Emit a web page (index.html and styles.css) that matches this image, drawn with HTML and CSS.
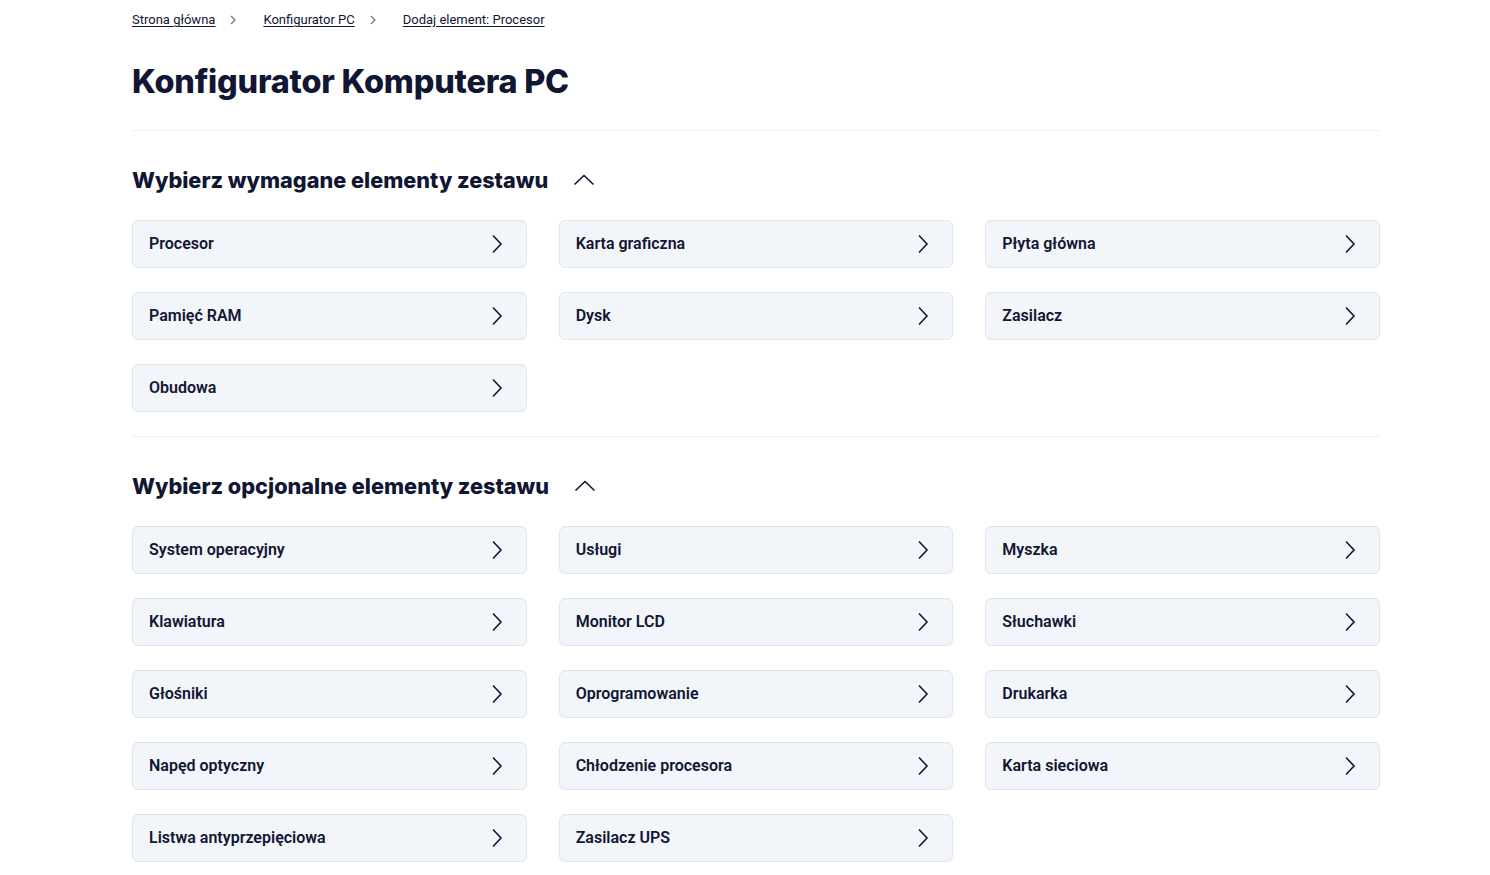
FILE: index.html
```html
<!DOCTYPE html>
<html lang="pl">
<head>
<meta charset="utf-8">
<title>Konfigurator Komputera PC</title>
<link rel="stylesheet" href="styles.css">
</head>
<body>
<div class="page">
  <nav class="crumbs">
    <a href="#">Strona główna</a>
    <svg class="sep" viewBox="0 0 8 10" width="8" height="10"><path d="M2 1l4 4-4 4" fill="none" stroke="#6b7085" stroke-width="1.2"/></svg>
    <a href="#">Konfigurator PC</a>
    <svg class="sep" viewBox="0 0 8 10" width="8" height="10"><path d="M2 1l4 4-4 4" fill="none" stroke="#6b7085" stroke-width="1.2"/></svg>
    <a href="#">Dodaj element: Procesor</a>
  </nav>
  <h1 class="title">Konfigurator Komputera PC</h1>
  <hr class="divider">
  <section class="group">
    <div class="group-head">
      <h2>Wybierz wymagane elementy zestawu</h2>
      <svg class="up" viewBox="0 0 22 12" width="22" height="12"><path d="M1.5 10.5l9.5-9 9.5 9" fill="none" stroke="#111633" stroke-width="1.6"/></svg>
    </div>
    <div class="grid">
      <a class="card" href="#"><span>Procesor</span><svg viewBox="0 0 12 20" width="12" height="20"><path d="M2 1.5l8 8.5-8 8.5" fill="none" stroke="#111633" stroke-width="1.6"/></svg></a>
      <a class="card" href="#"><span>Karta graficzna</span><svg viewBox="0 0 12 20" width="12" height="20"><path d="M2 1.5l8 8.5-8 8.5" fill="none" stroke="#111633" stroke-width="1.6"/></svg></a>
      <a class="card" href="#"><span>Płyta główna</span><svg viewBox="0 0 12 20" width="12" height="20"><path d="M2 1.5l8 8.5-8 8.5" fill="none" stroke="#111633" stroke-width="1.6"/></svg></a>
      <a class="card" href="#"><span>Pamięć RAM</span><svg viewBox="0 0 12 20" width="12" height="20"><path d="M2 1.5l8 8.5-8 8.5" fill="none" stroke="#111633" stroke-width="1.6"/></svg></a>
      <a class="card" href="#"><span>Dysk</span><svg viewBox="0 0 12 20" width="12" height="20"><path d="M2 1.5l8 8.5-8 8.5" fill="none" stroke="#111633" stroke-width="1.6"/></svg></a>
      <a class="card" href="#"><span>Zasilacz</span><svg viewBox="0 0 12 20" width="12" height="20"><path d="M2 1.5l8 8.5-8 8.5" fill="none" stroke="#111633" stroke-width="1.6"/></svg></a>
      <a class="card" href="#"><span>Obudowa</span><svg viewBox="0 0 12 20" width="12" height="20"><path d="M2 1.5l8 8.5-8 8.5" fill="none" stroke="#111633" stroke-width="1.6"/></svg></a>
    </div>
  </section>
  <hr class="divider">
  <section class="group">
    <div class="group-head">
      <h2>Wybierz opcjonalne elementy zestawu</h2>
      <svg class="up" viewBox="0 0 22 12" width="22" height="12"><path d="M1.5 10.5l9.5-9 9.5 9" fill="none" stroke="#111633" stroke-width="1.6"/></svg>
    </div>
    <div class="grid">
      <a class="card" href="#"><span>System operacyjny</span><svg viewBox="0 0 12 20" width="12" height="20"><path d="M2 1.5l8 8.5-8 8.5" fill="none" stroke="#111633" stroke-width="1.6"/></svg></a>
      <a class="card" href="#"><span>Usługi</span><svg viewBox="0 0 12 20" width="12" height="20"><path d="M2 1.5l8 8.5-8 8.5" fill="none" stroke="#111633" stroke-width="1.6"/></svg></a>
      <a class="card" href="#"><span>Myszka</span><svg viewBox="0 0 12 20" width="12" height="20"><path d="M2 1.5l8 8.5-8 8.5" fill="none" stroke="#111633" stroke-width="1.6"/></svg></a>
      <a class="card" href="#"><span>Klawiatura</span><svg viewBox="0 0 12 20" width="12" height="20"><path d="M2 1.5l8 8.5-8 8.5" fill="none" stroke="#111633" stroke-width="1.6"/></svg></a>
      <a class="card" href="#"><span>Monitor LCD</span><svg viewBox="0 0 12 20" width="12" height="20"><path d="M2 1.5l8 8.5-8 8.5" fill="none" stroke="#111633" stroke-width="1.6"/></svg></a>
      <a class="card" href="#"><span>Słuchawki</span><svg viewBox="0 0 12 20" width="12" height="20"><path d="M2 1.5l8 8.5-8 8.5" fill="none" stroke="#111633" stroke-width="1.6"/></svg></a>
      <a class="card" href="#"><span>Głośniki</span><svg viewBox="0 0 12 20" width="12" height="20"><path d="M2 1.5l8 8.5-8 8.5" fill="none" stroke="#111633" stroke-width="1.6"/></svg></a>
      <a class="card" href="#"><span>Oprogramowanie</span><svg viewBox="0 0 12 20" width="12" height="20"><path d="M2 1.5l8 8.5-8 8.5" fill="none" stroke="#111633" stroke-width="1.6"/></svg></a>
      <a class="card" href="#"><span>Drukarka</span><svg viewBox="0 0 12 20" width="12" height="20"><path d="M2 1.5l8 8.5-8 8.5" fill="none" stroke="#111633" stroke-width="1.6"/></svg></a>
      <a class="card" href="#"><span>Napęd optyczny</span><svg viewBox="0 0 12 20" width="12" height="20"><path d="M2 1.5l8 8.5-8 8.5" fill="none" stroke="#111633" stroke-width="1.6"/></svg></a>
      <a class="card" href="#"><span>Chłodzenie procesora</span><svg viewBox="0 0 12 20" width="12" height="20"><path d="M2 1.5l8 8.5-8 8.5" fill="none" stroke="#111633" stroke-width="1.6"/></svg></a>
      <a class="card" href="#"><span>Karta sieciowa</span><svg viewBox="0 0 12 20" width="12" height="20"><path d="M2 1.5l8 8.5-8 8.5" fill="none" stroke="#111633" stroke-width="1.6"/></svg></a>
      <a class="card" href="#"><span>Listwa antyprzepięciowa</span><svg viewBox="0 0 12 20" width="12" height="20"><path d="M2 1.5l8 8.5-8 8.5" fill="none" stroke="#111633" stroke-width="1.6"/></svg></a>
      <a class="card" href="#"><span>Zasilacz UPS</span><svg viewBox="0 0 12 20" width="12" height="20"><path d="M2 1.5l8 8.5-8 8.5" fill="none" stroke="#111633" stroke-width="1.6"/></svg></a>
    </div>
  </section>
</div>
</body>
</html>
```
FILE: styles.css
```css
* { box-sizing: border-box; }
html, body { margin: 0; padding: 0; background: #fff; }
body {
  font-family: Roboto, "Liberation Sans", sans-serif;
  color: #111633;
}
.page {
  width: 1248px;
  margin-left: 132px;
  padding-bottom: 40px;
}
.crumbs {
  display: flex;
  align-items: center;
  gap: 14px;
  height: 40px;
  font-size: 13px;
  line-height: 16px;
}
.crumbs a {
  color: #111633;
  text-decoration: underline;
  text-underline-offset: 2px;
}
.crumbs .sep { margin: 0 12px 0 0; }
.title {
  margin: 20px 0 0;
  font-family: Inter, Roboto, sans-serif;
  font-weight: 800;
  font-size: 32.4px;
  line-height: 44px;
  letter-spacing: -0.2px;
}
.divider {
  margin: 26px 0 0;
  border: 0;
  border-top: 1px solid #edf1f5;
  height: 0;
}
.group-head {
  display: flex;
  align-items: center;
  gap: 25px;
  margin-top: 33px;
  height: 32px;
}
.group-head h2 {
  margin: 0;
  font-family: Inter, Roboto, sans-serif;
  font-weight: 800;
  font-size: 21.7px;
  line-height: 32px;
}
.group + .divider { margin-top: 24px; }
.grid {
  display: grid;
  grid-template-columns: repeat(3, 1fr);
  column-gap: 32px;
  row-gap: 24px;
  margin-top: 24px;
}
.card {
  display: flex;
  align-items: center;
  justify-content: space-between;
  height: 48px;
  padding: 0 23px 1px 16px;
  background: #f2f5f9;
  border: 1px solid #dfe5ec;
  border-radius: 6px;
  color: #111633;
  text-decoration: none;
  font-size: 16px;
  font-weight: 600;
}
.card svg { flex: none; }
```
